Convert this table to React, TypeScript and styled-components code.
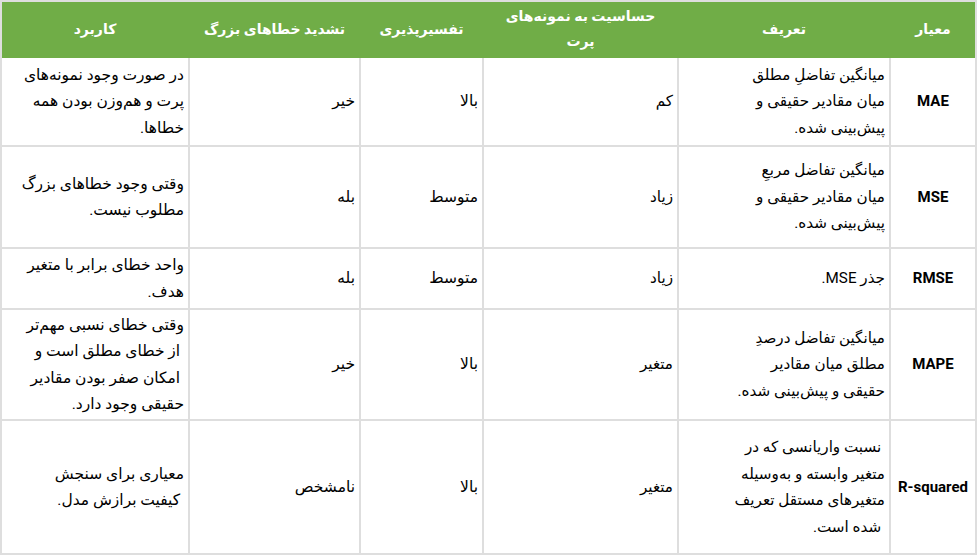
import React from "react";
import styled, { createGlobalStyle } from "styled-components";

const GlobalStyle = createGlobalStyle`
  html, body {
    margin: 0;
    padding: 0;
    background: #ffffff;
  }
  body {
    font-family: Roboto, "DejaVu Sans", sans-serif;
    color: #111111;
  }
`;

const GREEN = "#70ad47";
const LINE = "#dedede";

type Row = {
  metric: string;
  definition: string[];
  sensitivity: string;
  interpretability: string;
  amplifies: string;
  usage: string[];
  height: number;
};

const headers = [
  ["معیار"],
  ["تعریف"],
  ["حساسیت به نمونه‌های", "پرت"],
  ["تفسیرپذیری"],
  ["تشدید خطاهای بزرگ"],
  ["کاربرد"],
];

const rows: Row[] = [
  {
    metric: "MAE",
    definition: ["میانگین تفاضلِ مطلق", "میان مقادیر حقیقی و", "پیش‌بینی شده."],
    sensitivity: "کم",
    interpretability: "بالا",
    amplifies: "خیر",
    usage: ["در صورت وجود نمونه‌های", "پرت و هم‌وزن بودن همه", "خطاها."],
    height: 89,
  },
  {
    metric: "MSE",
    definition: ["میانگین تفاضل مربعِ", "میان مقادیر حقیقی و", "پیش‌بینی شده."],
    sensitivity: "زیاد",
    interpretability: "متوسط",
    amplifies: "بله",
    usage: ["وقتی وجود خطاهای بزرگ", "مطلوب نیست."],
    height: 102,
  },
  {
    metric: "RMSE",
    definition: ["جذر MSE."],
    sensitivity: "زیاد",
    interpretability: "متوسط",
    amplifies: "بله",
    usage: ["واحد خطای برابر با متغیر", "هدف."],
    height: 61,
  },
  {
    metric: "MAPE",
    definition: ["میانگین تفاضل درصدِ", "مطلق میان مقادیر", "حقیقی و پیش‌بینی شده."],
    sensitivity: "متغیر",
    interpretability: "بالا",
    amplifies: "خیر",
    usage: [
      "وقتی خطای نسبی مهم‌تر",
      "\u00a0از خطای مطلق است و",
      "\u00a0امکان صفر بودن مقادیر",
      "حقیقی وجود دارد.",
    ],
    height: 111,
  },
  {
    metric: "R-squared",
    definition: [
      "\u00a0نسبت واریانسی که در",
      "متغیر وابسته و به‌وسیله",
      "متغیرهای مستقل تعریف",
      "\u00a0شده است.",
    ],
    sensitivity: "متغیر",
    interpretability: "بالا",
    amplifies: "نامشخص",
    usage: ["معیاری برای سنجش", "\u00a0کیفیت برازش مدل."],
    height: 134,
  },
];

const colWidths = [86, 212, 195, 123, 171, 188];

const Table = styled.table`
  direction: rtl;
  width: 975px;
  table-layout: fixed;
  border-collapse: separate;
  border-spacing: 0;
  border-top: 2px solid ${LINE};
  border-right: 2px solid ${LINE};
`;

const HeadRow = styled.tr`
  height: 56px;
`;

const HeadCell = styled.th`
  background: ${GREEN};
  color: #ffffff;
  font-size: 14px;
  font-weight: bold;
  line-height: 25px;
  text-align: center;
  vertical-align: middle;
  padding: 0 4px 2px;
  border-left: 2px solid ${GREEN};

  &:last-child {
    border-left-color: ${LINE};
  }
`;

const BodyRow = styled.tr<{ $h: number }>`
  height: ${(p) => p.$h}px;
`;

const Cell = styled.td<{ $metric?: boolean; $size?: number }>`
  font-size: ${(p) => p.$size ?? 15}px;
  line-height: 26.5px;
  font-weight: ${(p) => (p.$metric ? "bold" : "normal")};
  text-align: ${(p) => (p.$metric ? "center" : "right")};
  vertical-align: middle;
  padding: 0 4px;
  border-left: 2px solid ${LINE};
  border-bottom: 2px solid ${LINE};
  white-space: nowrap;
  color: #000000;
`;

const Metric = styled.span`
  direction: ltr;
  unicode-bidi: isolate;
`;

const Lines: React.FC<{ lines: string[] }> = ({ lines }) => (
  <>
    {lines.map((l, i) => (
      <React.Fragment key={i}>
        {i > 0 && <br />}
        {l}
      </React.Fragment>
    ))}
  </>
);

export default function App() {
  return (
    <>
      <GlobalStyle />
      <Table>
        <colgroup>
          {colWidths.map((w, i) => (
            <col key={i} style={{ width: w }} />
          ))}
        </colgroup>
        <thead>
          <HeadRow>
            {headers.map((h, i) => (
              <HeadCell key={i}>
                <Lines lines={h} />
              </HeadCell>
            ))}
          </HeadRow>
        </thead>
        <tbody>
          {rows.map((r) => (
            <BodyRow key={r.metric} $h={r.height}>
              <Cell $metric>
                <Metric>{r.metric}</Metric>
              </Cell>
              <Cell $size={15.2}>
                <Lines lines={r.definition} />
              </Cell>
              <Cell $size={15.2}>{r.sensitivity}</Cell>
              <Cell $size={15.5}>{r.interpretability}</Cell>
              <Cell $size={15.5}>{r.amplifies}</Cell>
              <Cell $size={15.5}>
                <Lines lines={r.usage} />
              </Cell>
            </BodyRow>
          ))}
        </tbody>
      </Table>
    </>
  );
}
